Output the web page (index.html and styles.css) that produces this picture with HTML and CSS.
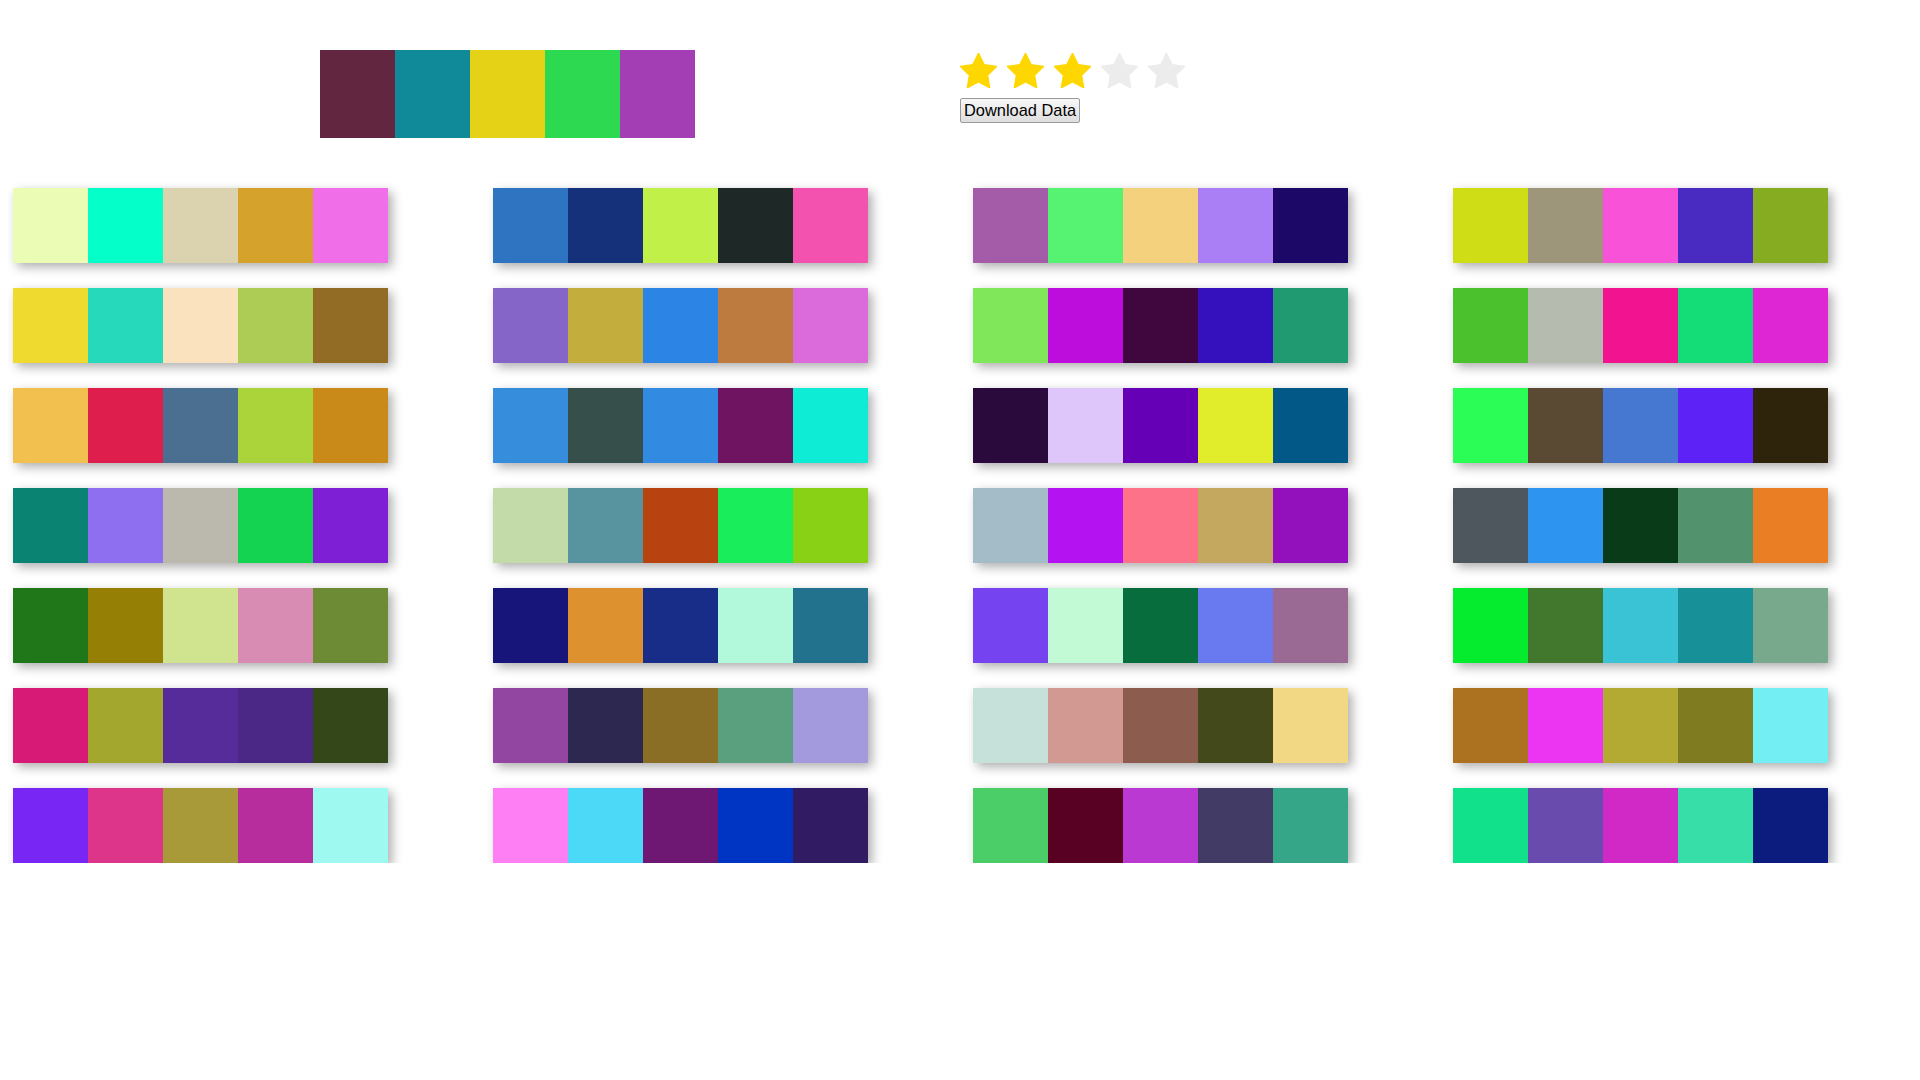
FILE: index.html
```html
<!DOCTYPE html>
<html>
<head>
<meta charset="utf-8">
<title>Palettes</title>
<link rel="stylesheet" href="styles.css">
</head>
<body>
<div class="header">
  <div class="palette main">
    <div class="sw" style="background:#622641"></div>
    <div class="sw" style="background:#108998"></div>
    <div class="sw" style="background:#e5d116"></div>
    <div class="sw" style="background:#2ed952"></div>
    <div class="sw" style="background:#a43eb4"></div>
  </div>
  <div class="controls">
    <div class="stars">
      <svg class="star on" viewBox="2 2 20 19.02"><path d="M12 2l3.09 6.26L22 9.27l-5 4.87 1.18 6.88L12 17.77l-6.18 3.25L7 14.14 2 9.27l6.91-1.01L12 2z"/></svg>
      <svg class="star on" viewBox="2 2 20 19.02"><path d="M12 2l3.09 6.26L22 9.27l-5 4.87 1.18 6.88L12 17.77l-6.18 3.25L7 14.14 2 9.27l6.91-1.01L12 2z"/></svg>
      <svg class="star on" viewBox="2 2 20 19.02"><path d="M12 2l3.09 6.26L22 9.27l-5 4.87 1.18 6.88L12 17.77l-6.18 3.25L7 14.14 2 9.27l6.91-1.01L12 2z"/></svg>
      <svg class="star off" viewBox="2 2 20 19.02"><path d="M12 2l3.09 6.26L22 9.27l-5 4.87 1.18 6.88L12 17.77l-6.18 3.25L7 14.14 2 9.27l6.91-1.01L12 2z"/></svg>
      <svg class="star off" viewBox="2 2 20 19.02"><path d="M12 2l3.09 6.26L22 9.27l-5 4.87 1.18 6.88L12 17.77l-6.18 3.25L7 14.14 2 9.27l6.91-1.01L12 2z"/></svg>
    </div>
    <button class="download">Download Data</button>
  </div>
</div>

<div class="grid">
  <!-- row 1 -->
  <div class="palette card"><div class="sw" style="background:#ebfcb5"></div><div class="sw" style="background:#05ffc8"></div><div class="sw" style="background:#dbd2b0"></div><div class="sw" style="background:#d5a22c"></div><div class="sw" style="background:#f06fe9"></div></div>
  <div class="palette card"><div class="sw" style="background:#2f74c0"></div><div class="sw" style="background:#14317a"></div><div class="sw" style="background:#c1f148"></div><div class="sw" style="background:#1e2826"></div><div class="sw" style="background:#f353ae"></div></div>
  <div class="palette card"><div class="sw" style="background:#a45ca9"></div><div class="sw" style="background:#56f271"></div><div class="sw" style="background:#f3d17d"></div><div class="sw" style="background:#aa7ff5"></div><div class="sw" style="background:#1c0867"></div></div>
  <div class="palette card"><div class="sw" style="background:#cfdd16"></div><div class="sw" style="background:#9d967b"></div><div class="sw" style="background:#f853d8"></div><div class="sw" style="background:#4a2bc2"></div><div class="sw" style="background:#86ac22"></div></div>
  <!-- row 2 -->
  <div class="palette card"><div class="sw" style="background:#efdb2f"></div><div class="sw" style="background:#27d9bb"></div><div class="sw" style="background:#f9e2bd"></div><div class="sw" style="background:#adcc55"></div><div class="sw" style="background:#926c24"></div></div>
  <div class="palette card"><div class="sw" style="background:#8565c7"></div><div class="sw" style="background:#c3ae3d"></div><div class="sw" style="background:#2c85e4"></div><div class="sw" style="background:#be7b40"></div><div class="sw" style="background:#db6bdb"></div></div>
  <div class="palette card"><div class="sw" style="background:#80e65a"></div><div class="sw" style="background:#bd0ddc"></div><div class="sw" style="background:#3f073d"></div><div class="sw" style="background:#3411bd"></div><div class="sw" style="background:#209a70"></div></div>
  <div class="palette card"><div class="sw" style="background:#4bc22d"></div><div class="sw" style="background:#b5bbae"></div><div class="sw" style="background:#f21390"></div><div class="sw" style="background:#14dc76"></div><div class="sw" style="background:#de26d5"></div></div>
  <!-- row 3 -->
  <div class="palette card"><div class="sw" style="background:#f1c04f"></div><div class="sw" style="background:#de1f4e"></div><div class="sw" style="background:#4a6f91"></div><div class="sw" style="background:#abd43a"></div><div class="sw" style="background:#c98a1a"></div></div>
  <div class="palette card"><div class="sw" style="background:#368ddb"></div><div class="sw" style="background:#364f4b"></div><div class="sw" style="background:#328be0"></div><div class="sw" style="background:#6f1460"></div><div class="sw" style="background:#0fecd6"></div></div>
  <div class="palette card"><div class="sw" style="background:#2a0a3c"></div><div class="sw" style="background:#dec6fa"></div><div class="sw" style="background:#6500b6"></div><div class="sw" style="background:#e1ec2b"></div><div class="sw" style="background:#025987"></div></div>
  <div class="palette card"><div class="sw" style="background:#2cfc56"></div><div class="sw" style="background:#5b4a33"></div><div class="sw" style="background:#4677d1"></div><div class="sw" style="background:#5d22f6"></div><div class="sw" style="background:#2e240b"></div></div>
  <!-- row 4 -->
  <div class="palette card"><div class="sw" style="background:#0a8373"></div><div class="sw" style="background:#8d6ff0"></div><div class="sw" style="background:#bbb8ae"></div><div class="sw" style="background:#13d350"></div><div class="sw" style="background:#7e1fd6"></div></div>
  <div class="palette card"><div class="sw" style="background:#c2dba9"></div><div class="sw" style="background:#5894a0"></div><div class="sw" style="background:#b94211"></div><div class="sw" style="background:#1aed5c"></div><div class="sw" style="background:#89d114"></div></div>
  <div class="palette card"><div class="sw" style="background:#a3bcc8"></div><div class="sw" style="background:#b512f2"></div><div class="sw" style="background:#fe7289"></div><div class="sw" style="background:#c4a85f"></div><div class="sw" style="background:#9310bd"></div></div>
  <div class="palette card"><div class="sw" style="background:#4e565e"></div><div class="sw" style="background:#2d94ef"></div><div class="sw" style="background:#093b19"></div><div class="sw" style="background:#52936d"></div><div class="sw" style="background:#e97e25"></div></div>
  <!-- row 5 -->
  <div class="palette card"><div class="sw" style="background:#20771a"></div><div class="sw" style="background:#958005"></div><div class="sw" style="background:#d0e490"></div><div class="sw" style="background:#d88bb3"></div><div class="sw" style="background:#6d8a35"></div></div>
  <div class="palette card"><div class="sw" style="background:#18157a"></div><div class="sw" style="background:#de912f"></div><div class="sw" style="background:#172d88"></div><div class="sw" style="background:#b2f9dc"></div><div class="sw" style="background:#22718d"></div></div>
  <div class="palette card"><div class="sw" style="background:#7543f0"></div><div class="sw" style="background:#c1fad4"></div><div class="sw" style="background:#076d3d"></div><div class="sw" style="background:#6979ef"></div><div class="sw" style="background:#9a6a95"></div></div>
  <div class="palette card"><div class="sw" style="background:#05eb2d"></div><div class="sw" style="background:#41782e"></div><div class="sw" style="background:#3ac3d4"></div><div class="sw" style="background:#179098"></div><div class="sw" style="background:#78a98c"></div></div>
  <!-- row 6 -->
  <div class="palette card"><div class="sw" style="background:#d71a76"></div><div class="sw" style="background:#a3a72d"></div><div class="sw" style="background:#562c9a"></div><div class="sw" style="background:#4c2886"></div><div class="sw" style="background:#344719"></div></div>
  <div class="palette card"><div class="sw" style="background:#9346a1"></div><div class="sw" style="background:#2d284f"></div><div class="sw" style="background:#8b6e25"></div><div class="sw" style="background:#5aa07e"></div><div class="sw" style="background:#a29adc"></div></div>
  <div class="palette card"><div class="sw" style="background:#c6e0da"></div><div class="sw" style="background:#d29892"></div><div class="sw" style="background:#8c5c4f"></div><div class="sw" style="background:#44491c"></div><div class="sw" style="background:#f2d784"></div></div>
  <div class="palette card"><div class="sw" style="background:#ac721f"></div><div class="sw" style="background:#ec35f3"></div><div class="sw" style="background:#b3aa33"></div><div class="sw" style="background:#7f7b20"></div><div class="sw" style="background:#73eef3"></div></div>
  <!-- row 7 -->
  <div class="palette card"><div class="sw" style="background:#7726f4"></div><div class="sw" style="background:#dd358a"></div><div class="sw" style="background:#a89939"></div><div class="sw" style="background:#b82d9d"></div><div class="sw" style="background:#9efaf0"></div></div>
  <div class="palette card"><div class="sw" style="background:#fe7ef4"></div><div class="sw" style="background:#4cd9f7"></div><div class="sw" style="background:#6e1873"></div><div class="sw" style="background:#0035c3"></div><div class="sw" style="background:#311b63"></div></div>
  <div class="palette card"><div class="sw" style="background:#4bcd68"></div><div class="sw" style="background:#590123"></div><div class="sw" style="background:#bb39d3"></div><div class="sw" style="background:#423b66"></div><div class="sw" style="background:#36a688"></div></div>
  <div class="palette card"><div class="sw" style="background:#12e18c"></div><div class="sw" style="background:#694bad"></div><div class="sw" style="background:#d029c6"></div><div class="sw" style="background:#38dea7"></div><div class="sw" style="background:#0b1c7e"></div></div>
</div>
</body>
</html>
```

FILE: styles.css
```css
html, body {
  background: #ffffff;
}
body {
  margin: 8px;
  font-family: "Liberation Sans", Arial, sans-serif;
}

.header {
  display: flex;
  align-items: flex-start;
  padding: 42px 0 0 312px;
  gap: 265px;
}

.palette {
  display: flex;
  width: 375px;
}
.palette .sw {
  flex: 0 0 75px;
  width: 75px;
}
.palette.main {
  height: 88px;
}

.controls {
  display: flex;
  flex-direction: column;
  align-items: flex-start;
  padding-top: 3px;
}
.stars {
  display: flex;
  gap: 10px;
  height: 36px;
}
.star {
  width: 37px;
  height: 35px;
  display: block;
}
.star path {
  stroke-linejoin: round;
  stroke-width: 0.6;
}
.star.on path {
  fill: #ffd700;
  stroke: #ffd700;
}
.star.off path {
  fill: #ececec;
  stroke: #ececec;
}

.download {
  margin-top: 9px;
  font-family: "Liberation Sans", Arial, sans-serif;
  font-size: 16.4px;
  line-height: 19px;
  height: 25px;
  padding: 2px 3px;
  color: #000;
  border: 1px solid #9a9a9a;
  border-radius: 2px;
  background: linear-gradient(#f7f7f7, #dedede);
}

.grid {
  display: grid;
  grid-template-columns: repeat(4, 480px);
  row-gap: 25px;
  margin-top: 50px;
  padding-left: 5px;
}
.card {
  height: 75px;
  box-shadow: 4px 4px 10px rgba(0, 0, 0, 0.32);
}
```
